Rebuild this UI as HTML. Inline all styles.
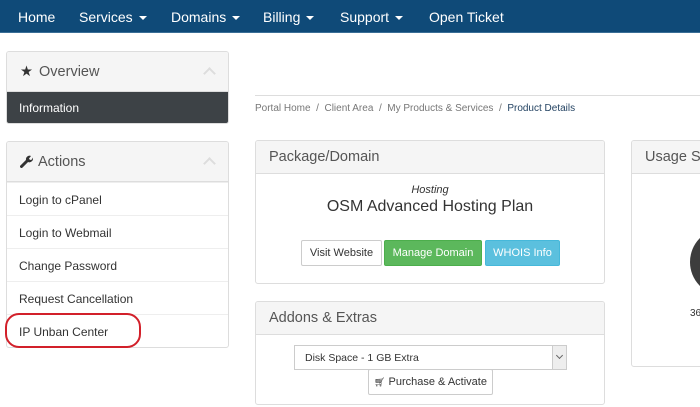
<!DOCTYPE html><html><head><style>
*{box-sizing:border-box;margin:0;padding:0}
body{width:700px;height:407px;overflow:hidden;background:#fff;font-family:"Liberation Sans",sans-serif;color:#333;position:relative}
.a{position:absolute}
.nav{left:0;top:0;width:700px;height:33px;background:#0f4a78;border-bottom:1px solid #3a6e96}
.nav span{position:absolute;top:9px;color:#fff;font-size:14px}
.car{display:inline-block;border-left:4px solid transparent;border-right:4px solid transparent;border-top:4px solid #fff;margin-left:6px;vertical-align:middle}
.p{border:1px solid #ddd;border-radius:3px;background:#fff;overflow:hidden}
.h{background:#f5f5f5;border-bottom:1px solid #ddd;font-size:14.5px;color:#555;padding-left:13px;white-space:nowrap}
.it{position:absolute;left:0;width:100%;height:33px;border-top:1px solid #eee;font-size:12px;padding:10px 0 0 12px;color:#333}
.btn{position:absolute;height:26px;font-size:11px;text-align:center;line-height:24px;border-radius:2px;border:1px solid;white-space:nowrap}
.chev{position:absolute;right:14px;width:9px;height:9px;border-left:2px solid #ddd;border-top:2px solid #ddd;transform:rotate(45deg)}
</style></head><body>
<div class="a nav">
<span style="left:18px">Home</span>
<span style="left:79px">Services<i class="car"></i></span>
<span style="left:171px">Domains<i class="car"></i></span>
<span style="left:263px">Billing<i class="car"></i></span>
<span style="left:340px">Support<i class="car"></i></span>
<span style="left:429px">Open Ticket</span>
</div>

<div class="a p" style="left:6px;top:51px;width:223px;height:73px">
<div class="h" style="height:40px;line-height:40px"><span style="color:#333">★</span> <span style="margin-left:2px">Overview</span></div>
<div class="chev" style="top:17px"></div>
<div class="a" style="left:0;top:40px;width:100%;height:33px;background:#3d4246;color:#fff;font-size:12px;padding:9px 0 0 12px">Information</div>
</div>

<div class="a p" style="left:6px;top:141px;width:223px;height:207px">
<div class="h" style="height:40px;line-height:40px"><svg width="14" height="14" viewBox="0 0 14 14" style="vertical-align:-2px;margin-right:4px"><path d="M1.5 12.5 L7 7" stroke="#333" stroke-width="3" stroke-linecap="round"/><path d="M6 6 A3.6 3.6 0 0 1 11 2 L9 4.5 L10 6 L12 5.5 L12.8 3.5 A3.6 3.6 0 0 1 8 8 Z" fill="#333"/></svg>Actions</div>
<div class="chev" style="top:17px"></div>
<div class="it" style="top:40px">Login to cPanel</div>
<div class="it" style="top:73px">Login to Webmail</div>
<div class="it" style="top:106px">Change Password</div>
<div class="it" style="top:139px">Request Cancellation</div>
<div class="it" style="top:172px">IP Unban Center</div>
</div>
<div class="a" style="left:5px;top:313px;width:136px;height:35px;border:2.5px solid #d2202a;border-radius:14px/14px"></div>

<div class="a" style="left:255px;top:95px;width:445px;border-top:1px solid #ddd"></div>
<div class="a" style="left:255px;top:103px;font-size:10px;color:#777">Portal Home &nbsp;/&nbsp; Client Area &nbsp;/&nbsp; My Products &amp; Services &nbsp;/&nbsp; <span style="color:#1f3f5f">Product Details</span></div>

<div class="a p" style="left:255px;top:140px;width:350px;height:144px">
<div class="h" style="height:33px;line-height:33px">Package/Domain</div>
<div class="a" style="left:0;width:100%;top:43px;text-align:center;font-size:11px;font-style:italic">Hosting</div>
<div class="a" style="left:0;width:100%;top:57px;text-align:center;font-size:16px">OSM Advanced Hosting Plan</div>
<div class="btn" style="left:45px;top:99px;width:81px;border-color:#ccc;background:#fff">Visit Website</div>
<div class="btn" style="left:128px;top:99px;width:98px;border-color:#4cae4c;background:#5cb85c;color:#fff">Manage Domain</div>
<div class="btn" style="left:229px;top:99px;width:75px;border-color:#46b8da;background:#5bc0de;color:#fff">WHOIS Info</div>
</div>

<div class="a p" style="left:255px;top:301px;width:350px;height:104px">
<div class="h" style="height:33px;line-height:33px">Addons &amp; Extras</div>
<div class="a" style="left:38px;top:43px;width:273px;height:25px;border:1px solid #ccc;font-size:10.5px;padding:6px 0 0 10px">Disk Space - 1 GB Extra
<div class="a" style="right:0;top:0;width:14px;height:23px;background:#eee;border-left:1px solid #ccc"><div class="a" style="left:4px;top:7px;width:5px;height:5px;border-right:1px solid #666;border-bottom:1px solid #666;transform:rotate(45deg)"></div></div></div>
<div class="btn" style="left:112px;top:67px;width:125px;border-color:#ccc;background:#fff"><span style="font-size:9px">🛒︎</span> Purchase &amp; Activate</div>
</div>

<div class="a p" style="left:631px;top:140px;width:90px;height:227px">
<div class="h" style="height:33px;line-height:33px">Usage Stats</div>
<div class="a" style="left:58px;top:88px;width:64px;height:66px;border-radius:50%;background:#3d3d3d"></div>
<div class="a" style="left:58px;top:167px;font-size:10px">36</div>
</div>
</body></html>
